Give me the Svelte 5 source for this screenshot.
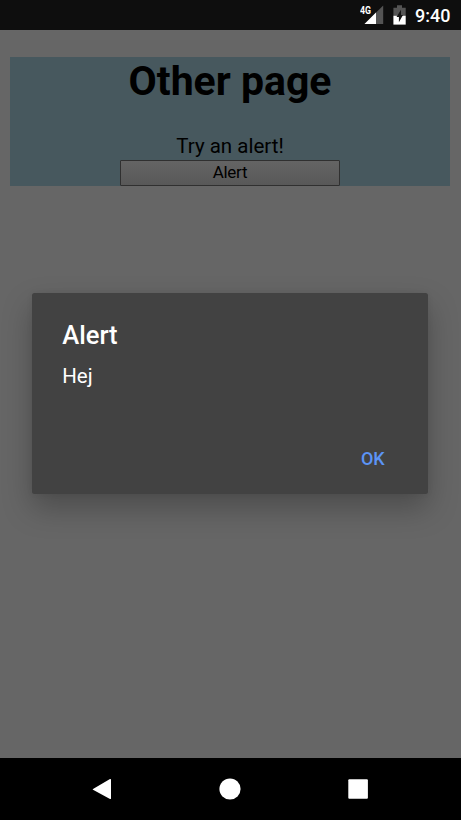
<script>
  let open = $state(true);
</script>

<div class="screen">
  <header class="status">
    <svg class="signal" width="25" height="30" viewBox="0 0 25 30">
      <path d="M23.2 5.5V24H4.5z" fill="#545454" />
      <path d="M16 12.6V24H4.5z" fill="#fff" />
      <text x="0" y="14" textLength="11" lengthAdjust="spacingAndGlyphs">4G</text>
    </svg>
    <svg class="battery" width="13" height="30" viewBox="0 0 13 30">
      <path d="M.4 7.8h3.6V5.3h5V7.8h3.7V16H.4z" fill="#545454" />
      <path d="M.4 15.8h12.3v8.8H.4z" fill="#fff" />
      <path d="M8 9.8L3.5 17h2.4v5.3L10 15H8z" fill="#141414" />
    </svg>
    <span class="time">9:40</span>
  </header>

  <main>
    <section>
      <h1>Other page</h1>
      <p>Try an alert!</p>
      <button class="trigger" onclick={() => (open = true)}>Alert</button>
    </section>
  </main>

  {#if open}
    <div class="dialog" role="alertdialog" aria-labelledby="title">
      <h2 id="title">Alert</h2>
      <p>Hej</p>
      <div class="actions">
        <button onclick={() => (open = false)}>OK</button>
      </div>
    </div>
  {/if}

  <nav>
    <svg width="22" height="22" viewBox="0 0 22 22"><path d="M2 11L19 1Q20 .6 20 1.8V20.2Q20 21.4 19 21L2 11.8Q1.3 11.4 2 11z" fill="#fff" /></svg>
    <svg width="22" height="22" viewBox="0 0 22 22"><circle cx="11" cy="11" r="10.6" fill="#fff" /></svg>
    <svg width="22" height="22" viewBox="0 0 22 22"><rect x="1.3" y="1.2" width="19.6" height="19.6" rx="1" fill="#fff" /></svg>
  </nav>
</div>

<style>
  :global(body) { margin: 0; }
  .screen {
    position: relative;
    box-sizing: border-box;
    width: 461px;
    height: 820px;
    overflow: hidden;
    display: flex;
    flex-direction: column;
    background: #666;
    font-family: Roboto, sans-serif;
    color: #000;
  }
  h1, h2, p { margin: 0; font-weight: 400; }
  button { font-family: inherit; padding: 0; border: 0; margin: 0; }
  .status {
    height: 30px;
    flex: none;
    display: flex;
    justify-content: flex-end;
    background: #0e0e0e;
    color: #fff;
    padding-right: 10.5px;
  }
  .signal text { font: 700 11.3px Roboto, sans-serif; fill: #fff; }
  .battery { margin: 0 9.5px 0 8px; }
  .time { font-size: 18px; line-height: 32px; font-weight: 500; }
  main { flex: 1; padding: 27px 11px 0 10px; }
  section {
    height: 129.3px;
    background: #47585e;
    display: flex;
    flex-direction: column;
    align-items: center;
  }
  h1 { font-size: 41px; line-height: 49px; font-weight: 700; white-space: nowrap; }
  section p { margin-top: 27px; margin-bottom: 1px; font-size: 20.5px; line-height: 26px; }
  .trigger {
    box-sizing: border-box;
    width: 220px;
    height: 26px;
    border: 1px solid #303030;
    border-radius: 1px;
    padding-bottom: 2px;
    background: linear-gradient(#646464, #585858);
    color: #000;
    font-size: 17px;
    letter-spacing: -.3px;
    line-height: 22px;
  }
  .dialog {
    position: absolute;
    left: 31.7px;
    top: 293.4px;
    box-sizing: border-box;
    width: 396.5px;
    height: 200.8px;
    padding: 26px 31px 0 30.5px;
    border-radius: 2.5px;
    background: #424242;
    color: #fff;
    box-shadow: 0 14px 30px rgba(0, 0, 0, .26), 0 0 6px rgba(0, 0, 0, .06);
  }
  h2 { font-size: 25.6px; line-height: 32px; font-weight: 500; }
  .dialog p { margin-top: 12px; font-size: 20.5px; line-height: 26px; }
  .actions { display: flex; justify-content: flex-end; margin-top: 58px; padding-right: 12.5px; }
  .actions button { background: none; color: #5c94f6; font-size: 18px; line-height: 24px; font-weight: 500; }
  nav {
    flex: none;
    height: 62px;
    background: #000;
    display: flex;
    justify-content: center;
    align-items: center;
    gap: 106px;
    padding-right: 1px;
  }
</style>
